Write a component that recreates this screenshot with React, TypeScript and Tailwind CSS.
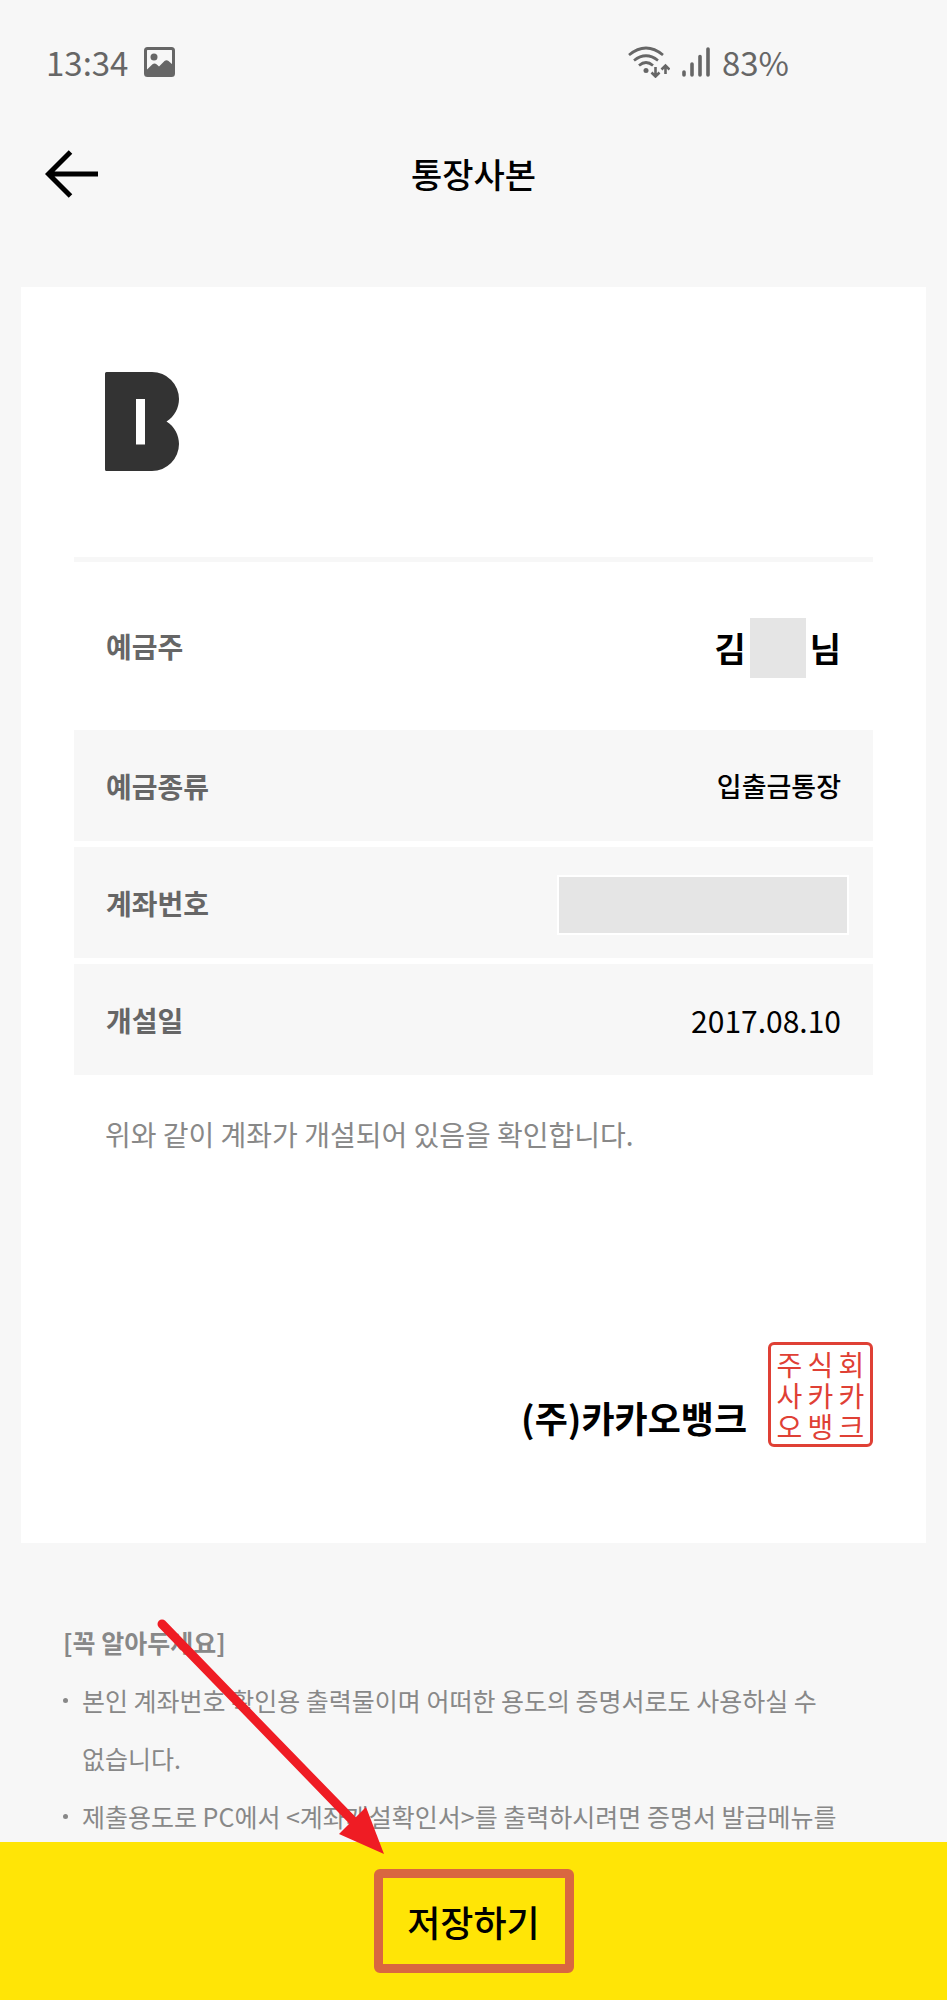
import type { ReactNode } from "react";

const sealCharacters = ["주", "식", "회", "사", "카", "카", "오", "뱅", "크"];

function PictureIcon() {
  return (
    <svg className="h-[30px] w-[31px]" viewBox="0 0 31 30" fill="none" aria-hidden="true">
      <rect x="1.5" y="1.5" width="28" height="27" rx="2" stroke="#666" strokeWidth="3" />
      <circle cx="10" cy="10" r="3.5" fill="#666" />
      <path d="M2 23.5 8.5 17.2Q10.500 15.8 12.500 17.200L15 19.500 20.500 14Q22.500 12.500 24.500 14L29 18V28H2Z" fill="#666" />
    </svg>
  );
}

function WifiIcon() {
  return (
    <svg className="h-8 w-[42px]" viewBox="0 0 42 32" fill="none" stroke="#666" strokeWidth="2.7" aria-hidden="true">
      <path d="M1 9Q18 -5 35 9M6 14.500Q18 5 30 14.500M11 19.500Q18 13.500 25 19.500" />
      <circle cx="18" cy="24.500" r="2.500" fill="#666" stroke="none" />
      <path d="M27.500 21V30M23.500 26.500 27.500 30.500 31.500 26.500M37.500 28V20M33.500 23.500 37.500 19.500 41.500 23.500" strokeWidth="2.600" />
    </svg>
  );
}

function SignalIcon() {
  return (
    <svg className="h-8 w-7" viewBox="0 0 28 32" stroke="#666" strokeWidth="3.600" strokeLinecap="round" aria-hidden="true">
      <path d="M2 26V29M10 18V29M18 10.500V29M26 3V29" />
    </svg>
  );
}

function BankLogo() {
  return (
    <svg className="h-[99px] w-[74px]" viewBox="0 0 74 99" role="img" aria-label="카카오뱅크">
      <path
        fillRule="evenodd"
        fill="#333"
        d="M1.500 0H47A27 27 0 0 1 74 27C74 36 69.500 44.500 61.500 49.500C69.500 54.500 74 63 74 72A27 27 0 0 1 47 99H1.500Q0 99 0 97.500V1.500Q0 0 1.500 0ZM31 27V72.500H40V27Z"
      />
    </svg>
  );
}

function InfoRow({ label, children }: { label: string; children: ReactNode }) {
  return (
    <div className="flex h-[111px] items-center justify-between bg-[#f7f7f7] px-8">
      <dt className="text-[28px] font-bold text-[#666]">{label}</dt>
      <dd className="text-black">{children}</dd>
    </div>
  );
}

export default function App() {
  return (
    <div className="flex h-screen flex-col overflow-hidden bg-[#f7f7f7] font-['Noto_Sans_CJK_KR','Noto_Sans',sans-serif] leading-none text-black">
      <div className="flex h-32 shrink-0 items-center justify-between pr-[158px] pb-1 pl-[46px] text-[33px] text-[#666]">
        <div className="flex items-center gap-4">
          <span>13:34</span>
          <PictureIcon />
        </div>
        <div className="flex items-center gap-3">
          <WifiIcon />
          <SignalIcon />
          <span>83%</span>
        </div>
      </div>

      <header className="grid h-[92px] shrink-0 grid-cols-3 items-center px-[45px]">
        <button type="button" aria-label="뒤로" className="w-fit">
          <svg className="h-12 w-[53px]" viewBox="0 0 53 48" fill="none" stroke="#000" strokeWidth="5" aria-hidden="true">
            <path d="M25.500 2 3.500 24 25.500 46M4 24H53" />
          </svg>
        </button>
        <h1 className="text-center text-[34px] font-medium">통장사본</h1>
      </header>

      <main className="min-h-0 flex-1 overflow-hidden px-[21px] pt-[67px]">
        <section className="bg-white px-[53px] pb-24">
          <div className="border-b-[5px] border-[#f7f7f7] pt-[85px] pb-[86px] pl-[31px]">
            <BankLogo />
          </div>

          <dl>
            <div className="flex h-[168px] items-center justify-between px-8">
              <dt className="text-[28px] font-bold text-[#666]">예금주</dt>
              <dd className="flex items-center gap-1 pt-1 text-[34px] font-bold">
                <span>김</span>
                <span className="h-[60px] w-14 bg-[#e5e5e5]" />
                <span>님</span>
              </dd>
            </div>
            <div className="flex flex-col gap-1.5">
              <InfoRow label="예금종류">
                <span className="text-[27px] font-medium">입출금통장</span>
              </InfoRow>
              <InfoRow label="계좌번호">
                <span className="mt-1 -mr-2 block h-[60px] w-[292px] border-2 border-white bg-[#e5e5e5]" />
              </InfoRow>
              <InfoRow label="개설일">
                <span className="text-[30px]">2017.08.10</span>
              </InfoRow>
            </div>
          </dl>

          <p className="pt-[43px] pl-[31px] text-[28px] leading-8 text-[#888]">
            위와 같이 계좌가 개설되어 있음을 확인합니다.
          </p>

          <div className="flex items-end justify-end gap-[21px] pt-48">
            <p className="pb-3 text-[36px] font-bold">(주)카카오뱅크</p>
            <div className="grid size-[105px] grid-cols-3 place-items-center rounded-md border-3 border-[#df4035] p-[3px] text-[28px] text-[#df4035]">
              {sealCharacters.map((character, index) => (
                <span key={index}>{character}</span>
              ))}
            </div>
          </div>
        </section>

        <section className="px-[42px] pt-[70px] text-[25px] leading-[58px] text-[#888]">
          <h2 className="font-bold">[꼭 알아두세요]</h2>
          <ul>
            <li className="flex gap-3.5">
              <span className="mt-[27px] size-[5px] shrink-0 rounded-full bg-[#888]" />
              <span>
                본인 계좌번호 확인용 출력물이며 어떠한 용도의 증명서로도 사용하실 수
                <br />
                없습니다.
              </span>
            </li>
            <li className="flex gap-3.5">
              <span className="mt-[27px] size-[5px] shrink-0 rounded-full bg-[#888]" />
              <span>제출용도로 PC에서 &lt;계좌개설확인서&gt;를 출력하시려면 증명서 발급메뉴를</span>
            </li>
          </ul>
        </section>
      </main>

      <footer className="flex h-[158px] shrink-0 items-center justify-center bg-[#ffe506]">
        <div className="relative">
          <button type="button" className="h-[104px] w-[200px] rounded-md border-[9px] border-[#d96740] text-[36px] font-medium">
            저장하기
          </button>
          <svg
            className="pointer-events-none absolute -top-[251px] -left-[218px] h-[238px] w-[230px]"
            viewBox="0 0 230 238"
            fill="none"
            aria-hidden="true"
          >
            <path d="M6 6 200 206" stroke="#ef1c24" strokeWidth="9" strokeLinecap="round" />
            <path d="M228 236 183 216 210 189Z" fill="#ef1c24" />
          </svg>
        </div>
      </footer>
    </div>
  );
}
